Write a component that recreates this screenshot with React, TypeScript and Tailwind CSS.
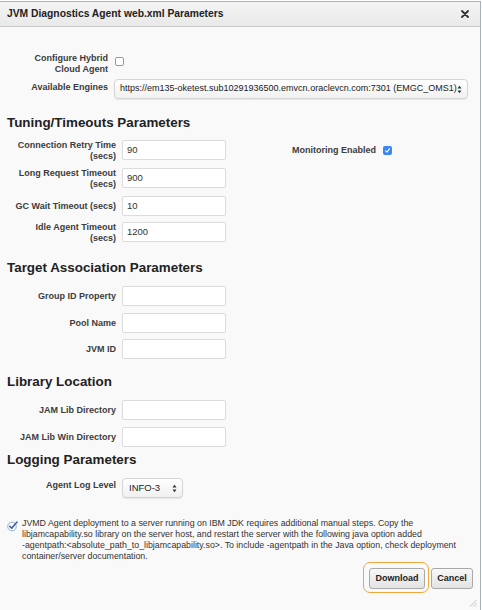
import React from "react";

function Arrows() {
  return (
    <svg width="5" height="9" viewBox="0 0 5 9" className="shrink-0">
      <path d="M0.5 3.5 L2.5 0.8 L4.5 3.5 Z" fill="#333" />
      <path d="M0.5 5.5 L2.5 8.2 L4.5 5.5 Z" fill="#333" />
    </svg>
  );
}

function TextInput({ value }: { value?: string }) {
  return (
    <div className="w-[104px] h-[20px] bg-white border border-[#dcdcdc] rounded-[2px] pl-[4px] flex items-center text-[9.5px] text-[#333]">
      {value}
    </div>
  );
}

function Label2({ a, b }: { a: string; b: string }) {
  return (
    <div className="text-right text-[9px] font-bold text-[#3c3c3c] leading-[11px]">
      <div>{a}</div>
      <div>{b}</div>
    </div>
  );
}

function Label1({ t }: { t: string }) {
  return (
    <div className="text-right text-[9px] font-bold text-[#3c3c3c] leading-[20px]">{t}</div>
  );
}

function Row({ label, children }: { label: React.ReactNode; children: React.ReactNode }) {
  return (
    <div className="grid grid-cols-[109px_auto] gap-x-[6px] items-start">
      {label}
      <div>{children}</div>
    </div>
  );
}

function Heading({ t, mt }: { t: string; mt: string }) {
  return (
    <div className={`${mt} text-[13.4px] leading-[18px] font-bold text-[#222]`}>{t}</div>
  );
}

export default function App() {
  return (
    <div className="w-[482px] h-[610px] bg-white overflow-hidden font-['Liberation_Sans',Arial,sans-serif]">
      <div className="w-[481px] h-[610px] mt-[1px] border-t border-r border-[#a7b2bf] bg-[#f9f9f9] flex flex-col relative">
        {/* header */}
        <div className="h-[25px] shrink-0 bg-gradient-to-b from-[#f4f4f4] to-[#e9e9e9] border-b border-[#c9c9c9] flex items-center justify-between pl-[7px] pr-[11px]">
          <span className="text-[10.3px] font-bold text-[#222]">JVM Diagnostics Agent web.xml Parameters</span>
          <svg width="8" height="8" viewBox="0 0 8 8">
            <path d="M1 1 L7 7 M7 1 L1 7" stroke="#333" strokeWidth="1.8" strokeLinecap="round" />
          </svg>
        </div>

        {/* body */}
        <div className="flex-1 pl-[7px] pr-[7px] pt-[26px] flex flex-col">
          <div className="grid grid-cols-[101px_auto] gap-x-[6px] items-start">
            <Label2 a="Configure Hybrid" b="Cloud Agent" />
            <div className="pt-[4px] pl-[1px]">
              <div className="w-[9px] h-[9px] bg-white border border-[#999] rounded-[2px]" />
            </div>
          </div>
          <div className="mt-[4px] grid grid-cols-[101px_auto] gap-x-[6px] items-center">
            <div className="text-right text-[9px] font-bold text-[#3c3c3c] pb-[2px]">Available Engines</div>
            <div className="w-[354px] h-[20px] rounded-[4px] bg-gradient-to-b from-[#ffffff] to-[#f1f1f1] border border-[#d4d4d4] shadow-[0_1px_1px_rgba(0,0,0,0.08)] flex items-center justify-between pl-[5px] pr-[5px] text-[9px] text-[#222]">
              <span className="whitespace-nowrap">https://em135-oketest.sub10291936500.emvcn.oraclevcn.com:7301 (EMGC_OMS1)</span>
              <Arrows />
            </div>
          </div>

          <Heading t="Tuning/Timeouts Parameters" mt="mt-[15px]" />
          <div className="mt-[8px] flex">
            <div className="flex flex-col gap-[6px]">
              <Row label={<Label2 a="Connection Retry Time" b="(secs)" />}>
                <TextInput value="90" />
              </Row>
              <Row label={<Label2 a="Long Request Timeout" b="(secs)" />}>
                <TextInput value="900" />
              </Row>
              <Row label={<Label1 t="GC Wait Timeout (secs)" />}>
                <TextInput value="10" />
              </Row>
              <Row label={<Label2 a="Idle Agent Timeout" b="(secs)" />}>
                <TextInput value="1200" />
              </Row>
            </div>
            <div className="ml-[66px] mt-[5px] flex items-start gap-[7px] h-[11px]">
              <span className="text-[9px] font-bold text-[#3c3c3c] leading-[11px]">Monitoring Enabled</span>
              <div className="w-[9px] h-[9px] mt-[1px] rounded-[2px] bg-[#3b86f7] flex items-center justify-center">
                <svg width="7" height="7" viewBox="0 0 7 7">
                  <path d="M1.6 3.8 L3 5.2 L5.6 1.6" stroke="white" strokeWidth="1.1" fill="none" strokeLinecap="round" strokeLinejoin="round" />
                </svg>
              </div>
            </div>
          </div>

          <Heading t="Target Association Parameters" mt="mt-[15px]" />
          <div className="mt-[9px] flex flex-col gap-[6.5px]">
            <Row label={<Label1 t="Group ID Property" />}>
              <TextInput />
            </Row>
            <Row label={<Label1 t="Pool Name" />}>
              <TextInput />
            </Row>
            <Row label={<Label1 t="JVM ID" />}>
              <TextInput />
            </Row>
          </div>

          <Heading t="Library Location" mt="mt-[14px]" />
          <div className="mt-[9px] flex flex-col gap-[7px]">
            <Row label={<Label1 t="JAM Lib Directory" />}>
              <TextInput />
            </Row>
            <Row label={<Label1 t="JAM Lib Win Directory" />}>
              <TextInput />
            </Row>
          </div>

          <Heading t="Logging Parameters" mt="mt-[4px]" />
          <div className="mt-[9px]">
            <Row label={<div className="text-right text-[9px] font-bold text-[#3c3c3c] leading-[14px]">Agent Log Level</div>}>
              <div className="w-[61px] h-[20px] rounded-[4px] bg-gradient-to-b from-[#ffffff] to-[#f0f0f0] border border-[#d4d4d4] shadow-[0_1px_1px_rgba(0,0,0,0.08)] flex items-center justify-between pl-[6px] pr-[5px] text-[9.5px] text-[#222]">
                <span>INFO-3</span>
                <Arrows />
              </div>
            </Row>
          </div>

          <div className="mt-[20px] flex gap-[4px]">
            <svg width="11" height="12" viewBox="0 0 11 12" className="shrink-0 mt-[2px]">
              <circle cx="5" cy="6.5" r="4.3" fill="none" stroke="#8fb0d6" strokeWidth="1" />
              <path d="M2.8 6.3 L4.7 8.3 L10 2" stroke="#3a5f9c" strokeWidth="1.5" fill="none" strokeLinecap="round" strokeLinejoin="round" />
            </svg>
            <div className="text-[8.8px] leading-[11px] text-[#333] whitespace-nowrap">
              JVMD Agent deployment to a server running on IBM JDK requires additional manual steps. Copy the
              <br />
              libjamcapability.so library on the server host, and restart the server with the following java option added
              <br />
              -agentpath:&lt;absolute_path_to_libjamcapability.so&gt;. To include -agentpath in the Java option, check deployment
              <br />
              container/server documentation.
            </div>
          </div>

          <div className="mt-[6px] flex justify-end gap-[6px]">
            <div className="relative">
              <div className="absolute left-[-6px] top-[-6px] right-[-4px] bottom-[-4px] rounded-[7px] border-[1.5px] border-[#f2a73b]" />
              <div className="relative w-[56px] h-[21px] rounded-[3px] border border-[#a9a9a9] bg-gradient-to-b from-[#f8f8f8] to-[#e3e3e3] flex items-center justify-center text-[9px] font-bold text-[#222]">
                Download
              </div>
            </div>
            <div className="w-[42px] h-[21px] rounded-[3px] border border-[#a9a9a9] bg-gradient-to-b from-[#f8f8f8] to-[#e3e3e3] flex items-center justify-center text-[9px] font-bold text-[#222]">
              Cancel
            </div>
          </div>
        </div>

        <svg width="8" height="8" viewBox="0 0 8 8" className="absolute right-[3px] bottom-[4px]">
          <path d="M7.5 1 L1 7.5 M7.5 4 L4 7.5 M7.5 6.5 L6.5 7.5" stroke="#b5b5b5" strokeWidth="0.8" />
        </svg>
      </div>
    </div>
  );
}
